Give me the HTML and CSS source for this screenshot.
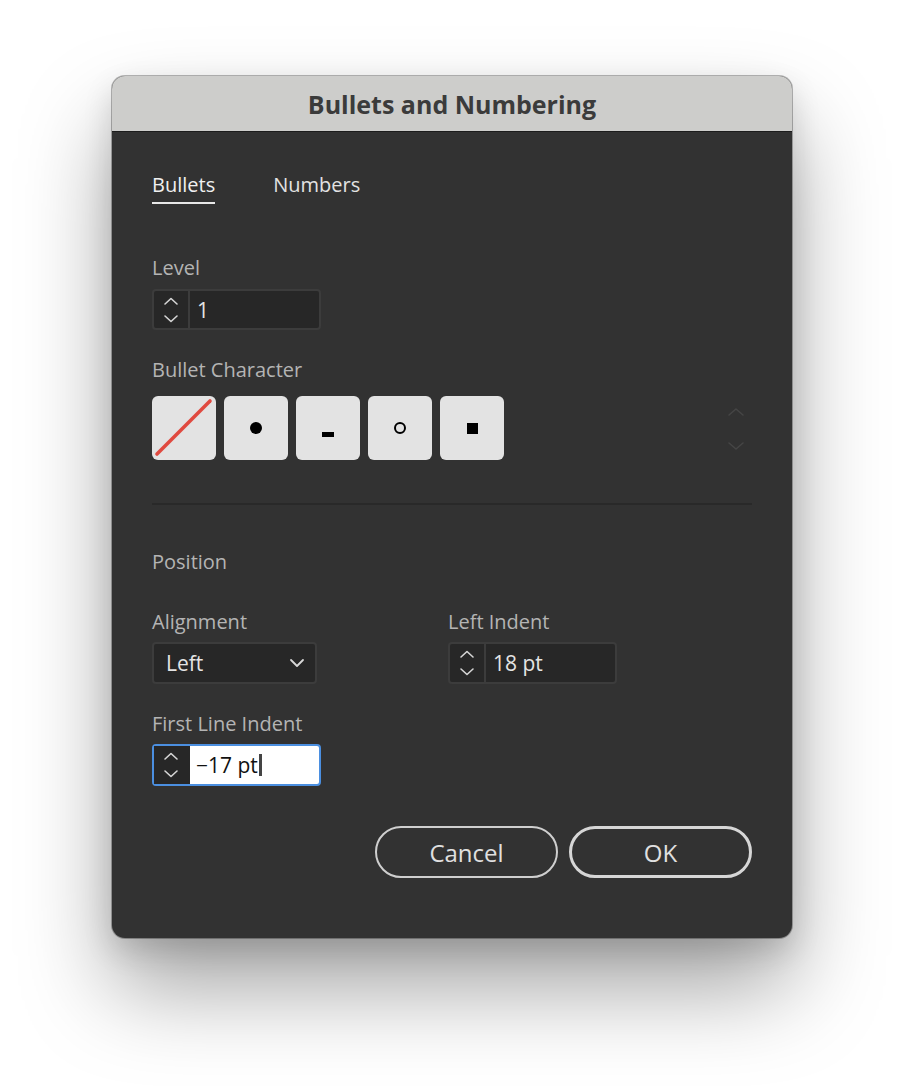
FILE: index.html
```html
<!DOCTYPE html>
<html>
<head>
<meta charset="utf-8">
<link rel="stylesheet" href="styles.css">
</head>
<body>
<div class="dialog">
  <div class="titlebar">Bullets and Numbering</div>
  <div class="content">
    <div class="tabs">
      <div class="tab active">Bullets</div>
      <div class="tab">Numbers</div>
    </div>

    <div class="label level-label">Level</div>
    <div class="stepper">
      <div class="spin">
        <svg width="16" height="30" viewBox="0 0 16 30"><path d="M2 9 L8 3.5 L14 9" /><path d="M2 21 L8 26.5 L14 21" /></svg>
      </div>
      <div class="value">1</div>
    </div>

    <div class="label bc-label">Bullet Character</div>
    <div class="bullets-row">
      <div class="tiles">
        <div class="tile"><svg width="64" height="64" viewBox="0 0 64 64"><line x1="5" y1="58" x2="58" y2="5" stroke="#e04a40" stroke-width="3.6" stroke-linecap="round"/></svg></div>
        <div class="tile"><span class="dot"></span></div>
        <div class="tile"><span class="dash"></span></div>
        <div class="tile"><span class="ring"></span></div>
        <div class="tile"><span class="square"></span></div>
      </div>
      <div class="scroll">
        <svg width="20" height="60" viewBox="0 0 20 60"><path d="M3 17 L10 11 L17 17" /><path d="M3 45 L10 51 L17 45" /></svg>
      </div>
    </div>

    <div class="divider"></div>

    <div class="label pos-label">Position</div>

    <div class="grid">
      <div class="field">
        <div class="label">Alignment</div>
        <div class="select">
          <span>Left</span>
          <svg width="16" height="10" viewBox="0 0 16 10"><path d="M2 2 L8 8 L14 2" /></svg>
        </div>
      </div>
      <div class="field">
        <div class="label">Left Indent</div>
        <div class="stepper">
          <div class="spin">
            <svg width="16" height="30" viewBox="0 0 16 30"><path d="M2 9 L8 3.5 L14 9" /><path d="M2 21 L8 26.5 L14 21" /></svg>
          </div>
          <div class="value">18 pt</div>
        </div>
      </div>
    </div>

    <div class="field fli">
      <div class="label">First Line Indent</div>
      <div class="stepper focused">
        <div class="spin">
          <svg width="16" height="30" viewBox="0 0 16 30"><path d="M2 9 L8 3.5 L14 9" /><path d="M2 21 L8 26.5 L14 21" /></svg>
        </div>
        <div class="value">−17 pt<span class="caret"></span></div>
      </div>
    </div>

    <div class="buttons">
      <button class="btn">Cancel</button>
      <button class="btn primary">OK</button>
    </div>
  </div>
</div>
</body>
</html>
```
FILE: styles.css
```css
html, body {
  margin: 0;
  padding: 0;
  background: #ffffff;
}
body {
  font-family: "Open Sans", "Lato", sans-serif;
  display: flex;
  justify-content: center;
  padding-top: 76px;
  height: 1086px;
  box-sizing: border-box;
  overflow: hidden;
}
.dialog {
  width: 680px;
  background: #323232;
  border-radius: 13px;
  box-shadow: 0 0 0 1px rgba(0,0,0,0.28), 0 50px 90px rgba(0,0,0,0.36), 0 12px 30px rgba(0,0,0,0.14);
  overflow: hidden;
  align-self: flex-start;
}
.titlebar {
  height: 55px;
  background: #cdcdcb;
  border-bottom: 1px solid #1c1c1c;
  color: #3b3b3b;
  font-weight: 700;
  font-size: 25px;
  display: flex;
  align-items: center;
  justify-content: center;
}
.content {
  padding: 41px 40px 60px 40px;
  display: flex;
  flex-direction: column;
}
.tabs {
  display: flex;
  gap: 58px;
}
.tab {
  font-size: 20px;
  font-weight: 500;
  color: #e2e2e2;
  line-height: 24px;
  padding-bottom: 5px;
  border-bottom: 2px solid transparent;
}
.tab.active {
  border-bottom-color: #e8e8e8;
  color: #f0f0f0;
}
.label {
  font-size: 20px;
  line-height: 22px;
  color: #b4b4b4;
  font-weight: 500;
}
.level-label { margin-top: 53px; }
.stepper {
  margin-top: 10px;
  width: 169px;
  height: 41px;
  box-sizing: border-box;
  border: 2px solid #3c3c3c;
  border-radius: 4px;
  background: #272727;
  display: flex;
}
.spin {
  width: 34px;
  border-right: 2px solid #3c3c3c;
  display: flex;
  align-items: center;
  justify-content: center;
}
.spin svg path {
  fill: none;
  stroke: #d6d6d6;
  stroke-width: 1.6;
  stroke-linecap: round;
  stroke-linejoin: round;
}
.value {
  flex: 1;
  display: flex;
  align-items: center;
  padding-left: 7px;
  font-size: 21px;
  color: #e4e4e4;
}
.bc-label { margin-top: 29px; }
.bullets-row {
  margin-top: 15px;
  display: flex;
  justify-content: space-between;
  align-items: center;
}
.tiles {
  display: flex;
  gap: 8px;
}
.tile {
  width: 64px;
  height: 64px;
  background: #e3e3e3;
  border-radius: 6px;
  display: flex;
  align-items: center;
  justify-content: center;
}
.dot {
  width: 12px;
  height: 12px;
  border-radius: 50%;
  background: #000;
}
.dash {
  width: 12px;
  height: 5px;
  background: #000;
  margin-top: 12px;
}
.ring {
  width: 8px;
  height: 8px;
  border: 2px solid #000;
  border-radius: 50%;
}
.square {
  width: 11px;
  height: 11px;
  background: #000;
}
.scroll {
  margin-right: 6px;
  display: flex;
}
.scroll svg path {
  fill: none;
  stroke: #454545;
  stroke-width: 1.6;
  stroke-linecap: round;
  stroke-linejoin: round;
}
.divider {
  margin-top: 43px;
  height: 2px;
  background: #292929;
}
.pos-label { margin-top: 46px; }
.grid {
  margin-top: 38px;
  display: grid;
  grid-template-columns: 296px 1fr;
}
.field .stepper,
.field .select {
  margin-top: 9px;
}
.select {
  width: 165px;
  height: 42px;
  box-sizing: border-box;
  border: 2px solid #3c3c3c;
  border-radius: 4px;
  background: #272727;
  display: flex;
  align-items: center;
  justify-content: space-between;
  padding: 0 10px 0 12px;
  font-size: 21px;
  color: #e4e4e4;
}
.select svg path {
  fill: none;
  stroke: #d8d8d8;
  stroke-width: 1.8;
  stroke-linecap: round;
  stroke-linejoin: round;
}
.field .stepper { height: 42px; }
.fli { margin-top: 29px; }
.stepper.focused {
  border-color: #4b8fe0;
  background: #ffffff;
}
.stepper.focused .spin {
  background: #272727;
  border-right-color: #272727;
}
.stepper.focused .value {
  color: #111;
  padding-left: 6px;
}
.caret {
  display: inline-block;
  width: 3px;
  height: 22px;
  background: #444;
  margin-left: 1px;
}
.buttons {
  margin-top: 40px;
  display: flex;
  justify-content: flex-end;
  gap: 11px;
}
.btn {
  width: 183px;
  height: 52px;
  border-radius: 26px;
  background: transparent;
  border: 2px solid #cfcfcf;
  color: #e0e0e0;
  font-family: "Open Sans", "Lato", sans-serif;
  font-size: 24px;
  font-weight: 500;
  padding: 0;
}
.btn.primary {
  border-width: 3px;
  border-color: #d6d6d6;
}
```
